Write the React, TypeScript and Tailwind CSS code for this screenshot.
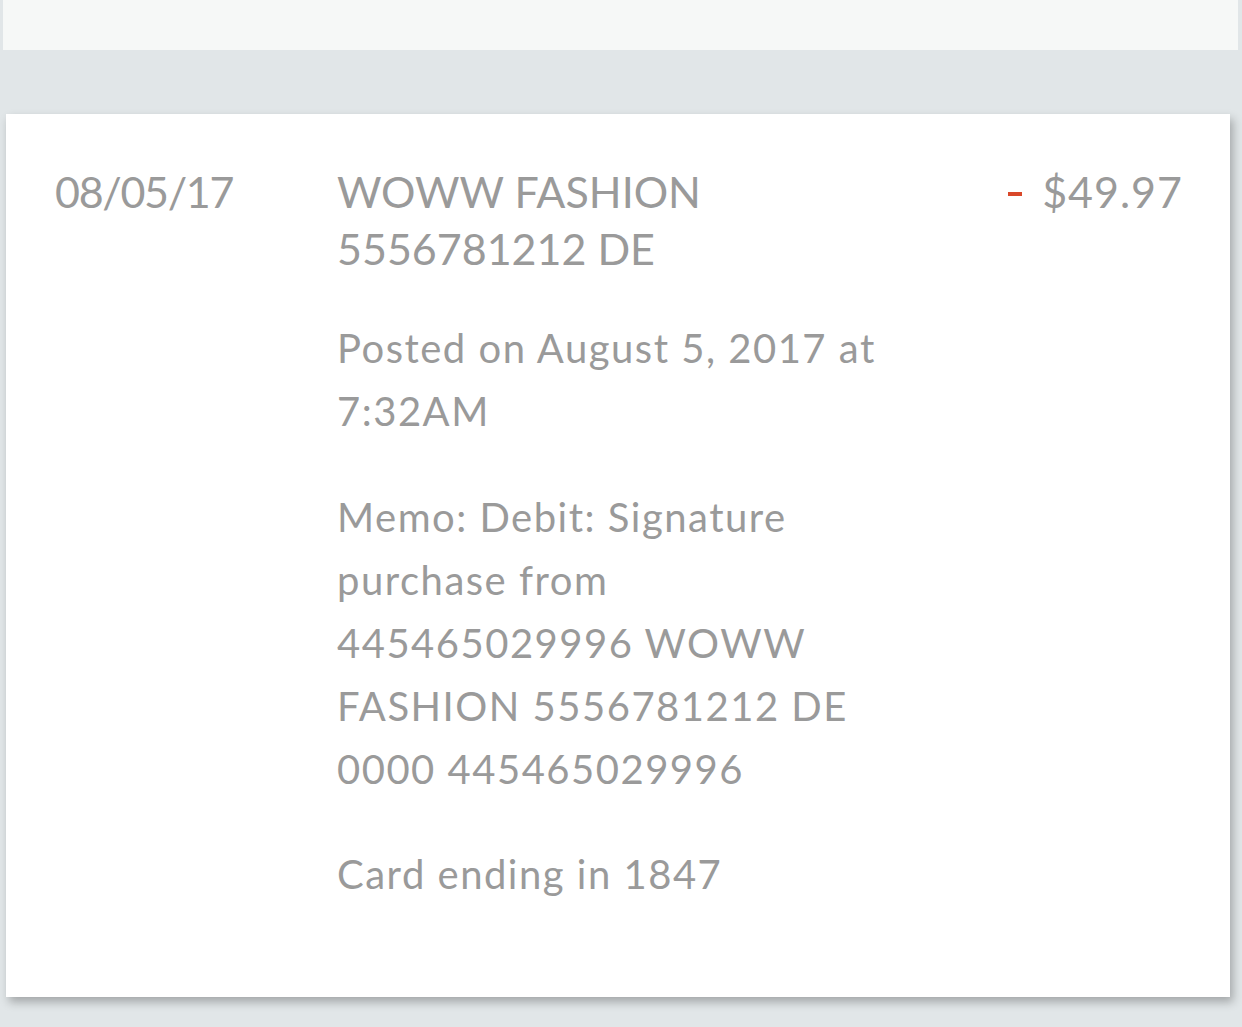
import React from 'react';

interface Transaction {
  date: string;
  merchant: string;
  posted: string;
  memo: string;
  card: string;
  amount: string;
}

const transaction: Transaction = {
  date: '08/05/17',
  merchant: 'WOWW FASHION 5556781212 DE',
  posted: 'Posted on August 5, 2017 at 7:32AM',
  memo: 'Memo: Debit: Signature purchase from 445465029996 WOWW FASHION 5556781212 DE 0000 445465029996',
  card: 'Card ending in 1847',
  amount: '$49.97',
};

const TransactionCard: React.FC<{ tx: Transaction }> = ({ tx }) => {
  return (
    <div className="mx-[6px] mr-[12px] bg-white shadow-[3px_5px_9px_rgba(0,0,0,0.28)] pl-[49px] pr-[48px] pt-[49px] pb-[49px]">
      <div className="flex">
        <div className="w-[282px] shrink-0 text-[43px] leading-[57px] tracking-[-1.3px]">{tx.date}</div>
        <div className="w-[556px] shrink-0">
          <p className="text-[43px] leading-[57px]">{tx.merchant}</p>
          <div className="text-[40px] leading-[63px] tracking-[1.5px]">
            <p className="mt-[40px]">{tx.posted}</p>
            <p className="mt-[43px]">{tx.memo}</p>
            <p className="mt-[42px] mb-[42px]">{tx.card}</p>
          </div>
        </div>
        <div className="flex-1 flex justify-end items-start text-[43px] leading-[57px] whitespace-nowrap">
          <span className="inline-block w-[14px] h-[4px] bg-[#d9482a] mt-[29px] mr-[20px]" />
          <span className="tracking-[1px] -mr-[1px]">{tx.amount}</span>
        </div>
      </div>
    </div>
  );
};

export default function App() {
  return (
    <div
      className="min-h-[1027px] bg-[#e1e6e8] text-[#9a9a9a]"
      style={{ fontFamily: 'Lato, "Open Sans", sans-serif' }}
    >
      <div className="mx-[3px] mr-[4px] h-[50px] bg-[#f6f8f7]" />
      <div className="pt-[64px] pb-[31px]">
        <TransactionCard tx={transaction} />
      </div>
    </div>
  );
}
